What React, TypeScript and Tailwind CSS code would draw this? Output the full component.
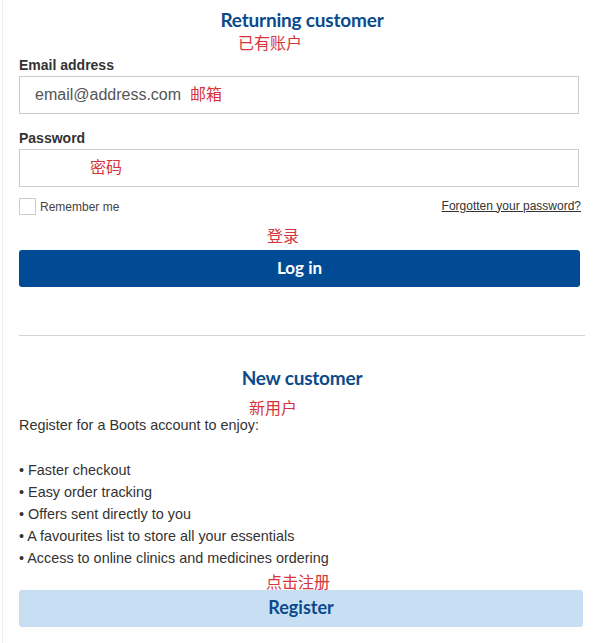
import React from "react";

const zh = { fontFamily: '"Noto Sans CJK SC", "Noto Sans", sans-serif' };
const head = { fontFamily: 'Lato, "Noto Sans", sans-serif' };
const body = { fontFamily: '"Liberation Sans", Arial, sans-serif' };

export default function App() {
  return (
    <div className="w-[600px] h-[643px] bg-white overflow-hidden pl-[2px]" style={body}>
      <div className="h-full border-l border-[#eeeeee] pl-[16px]">
        <div className="w-[566px] pt-[9px]">
          <h2
            className="text-center text-[19px] leading-[22px] font-bold text-[#0b4a8b] tracking-[-0.2px]"
            style={head}
          >
            Returning customer
          </h2>
          <div className="mt-[1px] pl-[219px] text-[16px] leading-[20px] text-[#d8333c]" style={zh}>
            已有账户
          </div>

          <label className="block mt-[4px] text-[14px] leading-[18px] font-bold text-[#333333]">
            Email address
          </label>
          <div className="mt-[2px] w-[560px] h-[38px] border border-[#cccccc] flex items-center pl-[15px]">
            <span className="text-[16px] text-[#555555]">email@address.com</span>
            <span className="ml-[9px] -mt-[4px] text-[16px] text-[#d8333c]" style={zh}>
              邮箱
            </span>
          </div>

          <label className="block mt-[15px] text-[14px] leading-[18px] font-bold text-[#333333]">
            Password
          </label>
          <div className="mt-[2px] w-[560px] h-[38px] border border-[#cccccc] flex items-center pl-[70px]">
            <span className="-mt-[5px] text-[16px] text-[#d8333c]" style={zh}>
              密码
            </span>
          </div>

          <div className="mt-[11px] w-[562px] h-[17px] flex items-center justify-between">
            <div className="flex items-center">
              <span className="w-[17px] h-[17px] border border-[#cccccc] bg-white" />
              <span className="ml-[4px] text-[12px] text-[#444444]">Remember me</span>
            </div>
            <a className="text-[12px] text-[#333333] underline -mt-[2px]">Forgotten your password?</a>
          </div>

          <div className="mt-[10px] pl-[248px] text-[16px] leading-[20px] text-[#d8333c]" style={zh}>
            登录
          </div>
          <button
            className="mt-[5px] w-[561px] h-[37px] rounded-[3px] bg-[#004b93] text-white text-[17px] font-bold flex items-center justify-center"
            style={head}
          >
            <span className="-mt-[2px]">Log in</span>
          </button>

          <div className="mt-[48px] w-[566px] border-t border-[#d4d4d4]" />

          <h2
            className="mt-[31px] text-center text-[19px] leading-[22px] font-bold text-[#0b4a8b] tracking-[-0.2px]"
            style={head}
          >
            New customer
          </h2>
          <div className="mt-[9px] pl-[230px] text-[16px] leading-[18px] text-[#d8333c]" style={zh}>
            新用户
          </div>
          <p className="mt-[1px] text-[14.4px] leading-[17px] text-[#333333]">
            Register for a Boots account to enjoy:
          </p>

          <ul className="mt-[25px] text-[14.4px] leading-[22px] text-[#333333]">
            <li>• Faster checkout</li>
            <li>• Easy order tracking</li>
            <li>• Offers sent directly to you</li>
            <li>• A favourites list to store all your essentials</li>
            <li>• Access to online clinics and medicines ordering</li>
          </ul>

          <div className="mt-[3px] pl-[247px] text-[16px] leading-[18px] text-[#d8333c]" style={zh}>
            点击注册
          </div>
          <button
            className="w-[564px] h-[37px] rounded-[3px] bg-[#c8dff3] text-[#0b4a8b] text-[18px] font-bold flex items-center justify-center"
            style={head}
          >
            <span className="-mt-[3px]">Register</span>
          </button>
        </div>
      </div>
    </div>
  );
}
